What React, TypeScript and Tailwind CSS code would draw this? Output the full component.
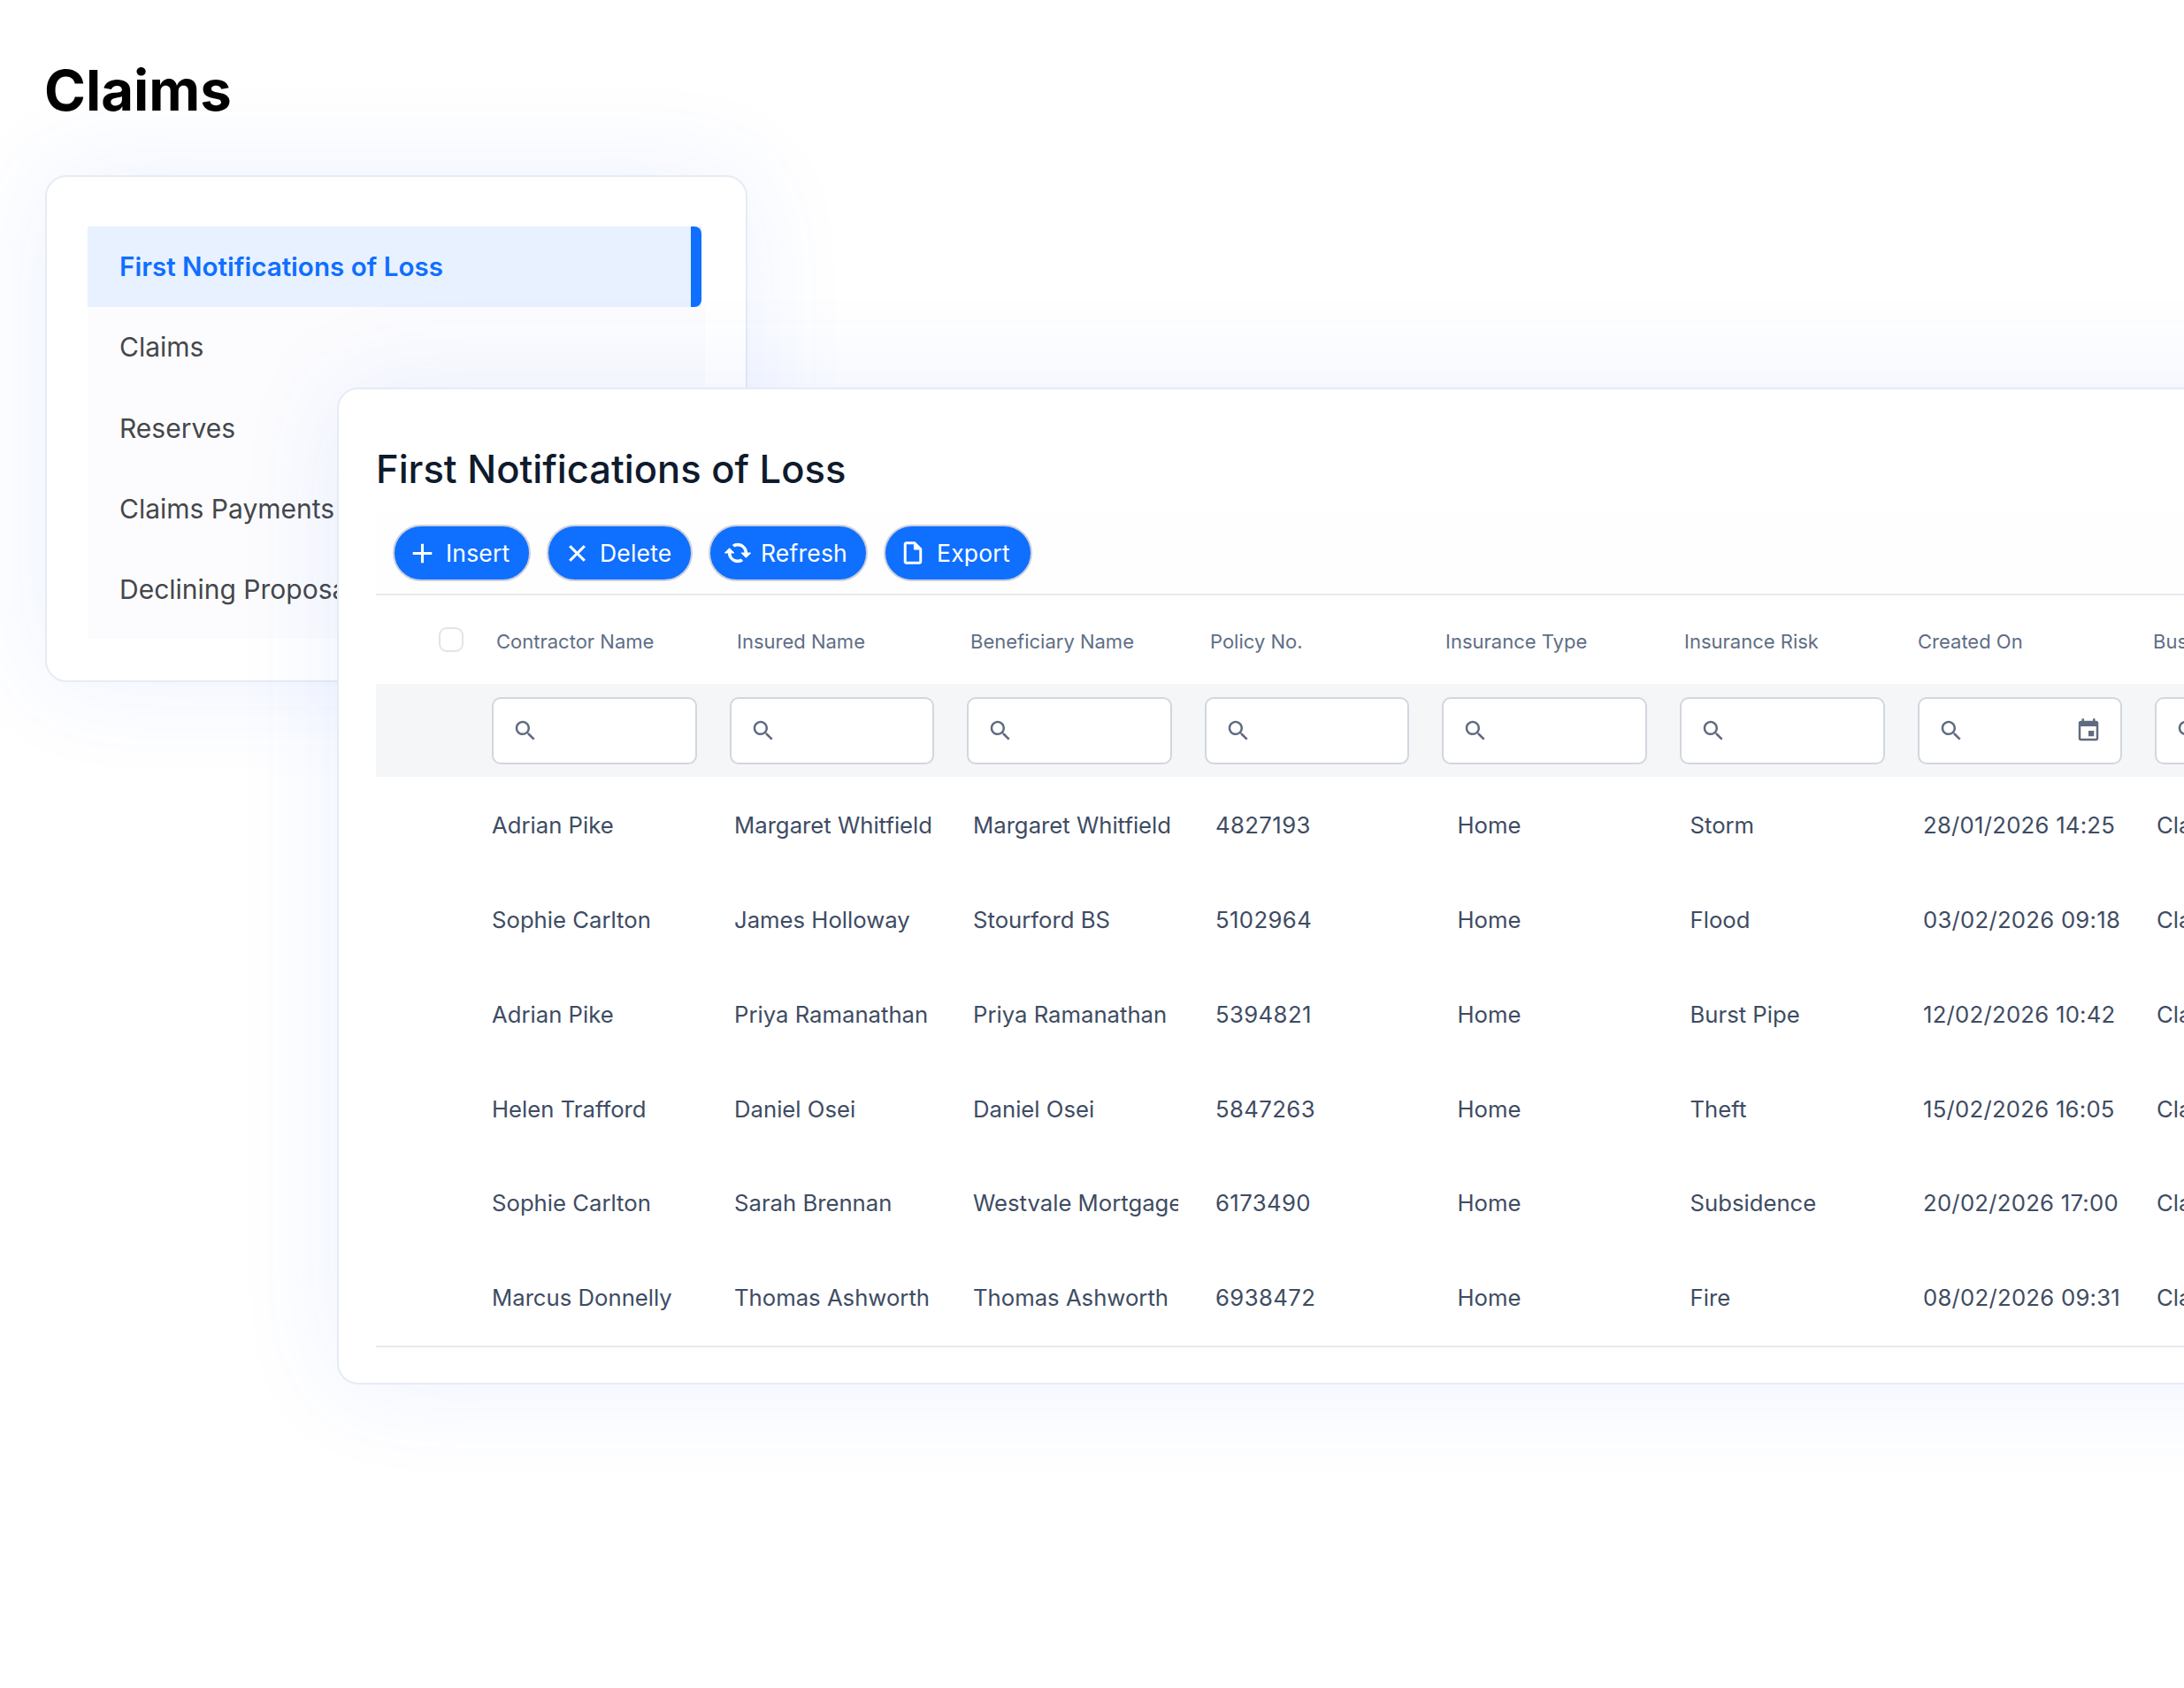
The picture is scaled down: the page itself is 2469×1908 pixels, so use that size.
import React from "react";

const ICONS = {
  add: "M19 13h-6v6h-2v-6H5v-2h6V5h2v6h6v2z",
  close: "M19 6.41 17.59 5 12 10.59 6.41 5 5 6.41 10.59 12 5 17.59 6.41 19 12 13.41 17.59 19 19 17.59 13.41 12z",
  cached: "M19 8l-4 4h3c0 3.31-2.69 6-6 6-1.01 0-1.97-.25-2.8-.7l-1.46 1.46C8.97 19.54 10.43 20 12 20c4.42 0 8-3.58 8-8h3l-4-4zM6 12c0-3.31 2.69-6 6-6 1.01 0 1.97.25 2.8.7l1.46-1.46C15.03 4.46 13.57 4 12 4c-4.42 0-8 3.58-8 8H1l4 4 4-4H6z",
  file: "M14 2H6c-1.1 0-1.99.9-1.99 2L4 20c0 1.1.89 2 1.99 2H18c1.1 0 2-.9 2-2V8l-6-6zM6 20V4h7v5h5v11H6z",
  search: "M15.5 14h-.79l-.28-.27C15.41 12.59 16 11.11 16 9.5 16 5.91 13.09 3 9.5 3S3 5.91 3 9.5 5.91 16 9.5 16c1.61 0 3.09-.59 4.23-1.57l.27.28v.79l5 4.99L20.49 19l-4.99-5zm-6 0C7.01 14 5 11.99 5 9.5S7.01 5 9.5 5 14 7.01 14 9.5 11.99 14 9.5 14z",
  event: "M17 12h-5v5h5v-5zM16 1v2H8V1H6v2H5c-1.11 0-1.99.9-1.99 2L3 19c0 1.1.89 2 2 2h14c1.1 0 2-.9 2-2V5c0-1.1-.9-2-2-2h-1V1h-2zm3 18H5V8h14v11z",
};

function Icon({ d, className }: { d: string; className: string }) {
  return (
    <svg viewBox="0 0 24 24" fill="currentColor" className={className}>
      <path d={d} />
    </svg>
  );
}

const buttons = [
  { label: "Insert", icon: ICONS.add, cls: "w-[156px] pl-[13px] gap-[8px]", size: "h-[37px] w-[37px]" },
  { label: "Delete", icon: ICONS.close, cls: "w-[165px] pl-[17px] gap-[10px]", size: "h-[31px] w-[31px] stroke-current stroke-[0.5px]" },
  { label: "Refresh", icon: ICONS.cached, cls: "w-[180px] pl-[15px] gap-[10px]", size: "h-[32px] w-[32px] -scale-x-100 stroke-current stroke-[0.7px]" },
  { label: "Export", icon: ICONS.file, cls: "w-[168px] pl-[16px] gap-[12px]", size: "h-[30px] w-[30px] stroke-current stroke-[0.4px]" },
];

const menu = ["Claims", "Reserves", "Claims Payments", "Declining Proposals"];

const headers = [
  ["Contractor Name", "w-[272px]"],
  ["Insured Name", "w-[264px]"],
  ["Beneficiary Name", "w-[271px]"],
  ["Policy No.", "w-[266px]"],
  ["Insurance Type", "w-[270px] -translate-y-px"],
  ["Insurance Risk", "w-[264px]"],
  ["Created On", "w-[266px]"],
  ["Business Unit", "w-[266px]"],
];

const cols = [
  "w-[274px]",
  "w-[270px]",
  "w-[274px]",
  "w-[273.5px] tracking-[0.4px]",
  "w-[263px]",
  "w-[263.5px]",
  "w-[264px] tracking-[0.25px]",
  "w-[264px]",
];

const rows = [
  ["Adrian Pike", "Margaret Whitfield", "Margaret Whitfield", "4827193", "Home", "Storm", "28/01/2026 14:25", "Claims Team"],
  ["Sophie Carlton", "James Holloway", "Stourford BS", "5102964", "Home", "Flood", "03/02/2026 09:18", "Claims Team"],
  ["Adrian Pike", "Priya Ramanathan", "Priya Ramanathan", "5394821", "Home", "Burst Pipe", "12/02/2026 10:42", "Claims Team"],
  ["Helen Trafford", "Daniel Osei", "Daniel Osei", "5847263", "Home", "Theft", "15/02/2026 16:05", "Claims Team"],
  ["Sophie Carlton", "Sarah Brennan", "Westvale Mortgages", "6173490", "Home", "Subsidence", "20/02/2026 17:00", "Claims Team"],
  ["Marcus Donnelly", "Thomas Ashworth", "Thomas Ashworth", "6938472", "Home", "Fire", "08/02/2026 09:31", "Claims Team"],
];

export default function App() {
  return (
    <div className="relative h-[1908px] w-[2469px] overflow-hidden bg-white font-['Inter',sans-serif] pl-[51px] pt-[63px]">
      <h1 className="-ml-[1px] text-[63.5px] font-bold leading-[78px] text-black">Claims</h1>

      <div className="mt-[57px] h-[573px] w-[794px] rounded-[24px] border-2 border-[#e6ebf4] bg-white px-[46px] pt-[56px] shadow-[0_0_120px_rgba(40,100,255,0.09)]">
        <div className="flex h-[91px] w-[694px] items-center justify-between bg-[#e8f1ff] pl-[36px] text-[29.6px] font-semibold text-[#0f6fff]">
          <span>First Notifications of Loss</span>
          <span className="h-full w-[12px] rounded-r-[8px] bg-[#0f6fff]" />
        </div>
        <div className="h-[375px] w-[698px] bg-[#fcfcfe]">
          {menu.map((m) => (
            <div key={m} className="flex h-[91.4px] items-center pl-[36px] text-[30px] text-[#45474b]">
              {m}
            </div>
          ))}
        </div>
      </div>

      <div className="absolute left-[381px] top-[438px] h-[1127px] w-[2300px] rounded-[24px] border-2 border-[#e6ebf4] bg-white pl-[42px] pt-[61px] shadow-[0_0_120px_rgba(40,100,255,0.09)]">
        <h2 className="text-[43.5px] font-medium leading-[58px] text-[#0f1b2d]">First Notifications of Loss</h2>

        <div className="mt-[17px] flex h-[97px] items-start gap-[18px] border-b-2 border-[#e6e9ef] bg-[#fefeff] pl-[19px] pt-[17px]">
          {buttons.map((b) => (
            <button
              key={b.label}
              className={`flex h-[64px] items-center ${b.cls} rounded-full border-2 border-[#cdd0d8] bg-[#0f6fff] text-[26.5px] tracking-[0.2px] text-white`}
            >
              <Icon d={b.icon} className={`shrink-0 ${b.size}`} />
              <span className="translate-y-px">{b.label}</span>
            </button>
          ))}
        </div>

        <div className="flex h-[100px] items-center pl-[71px] text-[22px] text-[#5f6e86]">
          <span className="mr-[37px] h-[28px] w-[28px] shrink-0 rounded-[9px] border-[2.5px] border-[#e2e4e8] bg-white" />
          {headers.map(([h, w]) => (
            <span key={h} className={`shrink-0 translate-y-[2px] whitespace-nowrap ${w}`}>
              {h}
            </span>
          ))}
        </div>

        <div className="flex h-[105px] items-center gap-[37px] bg-[#f5f6f8] pl-[131px]">
          {headers.map(([h], i) => (
            <div key={h} className="flex h-[76px] w-[231.6px] shrink-0 items-center justify-between rounded-[10px] border-2 border-[#d3d6e0] bg-white pl-[21px] pr-[21px] text-[#5f6b80]">
              <Icon d={ICONS.search} className="h-[30px] w-[30px]" />
              {i === 6 && <Icon d={ICONS.event} className="h-[30px] w-[30px]" />}
            </div>
          ))}
        </div>

        <div className="border-b-2 border-[#e6e9ef] pt-[2px]">
          {rows.map((r) => (
            <div key={r[0] + r[1]} className="flex h-[106.8px] items-center pl-[131px] text-[25.7px] text-[#3e4c63]">
              {r.map((c, i) => (
                <span key={i} className={`shrink-0 ${cols[i]}`}>
                  <span className="block max-w-[232px] overflow-hidden whitespace-nowrap">{c}</span>
                </span>
              ))}
            </div>
          ))}
        </div>
      </div>
    </div>
  );
}
